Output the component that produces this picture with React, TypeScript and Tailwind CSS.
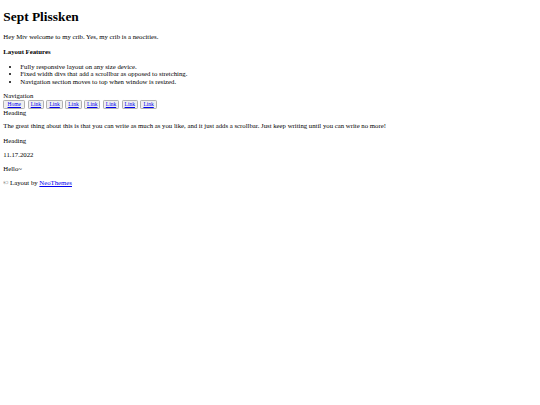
import React from "react";

export default function App() {
  const links = ["Link", "Link", "Link", "Link", "Link", "Link", "Link"];
  const btn =
    "h-[9.2px] bg-[#efefef] border-[0.8px] border-[#b0b0b0] rounded-[1.2px] text-[5.5px] leading-[6.3px] flex items-center justify-center";
  return (
    <div
      className="min-h-[405px] bg-white text-black px-[3.3px] pt-[9px] text-[6.75px] leading-[7.6px]"
      style={{ fontFamily: '"Liberation Serif", "Times New Roman", serif' }}
    >
      <h1 className="text-[13.4px] leading-[15.3px] font-bold">Sept Plissken</h1>
      <p className="mt-[8.9px]">Hey Mtv welcome to my crib. Yes, my crib is a neocities.</p>
      <p className="mt-[7.4px] font-bold">Layout Features</p>
      <ul className="mt-[6.9px] pl-[17px] list-disc">
        <li>Fully responsive layout on any size device.</li>
        <li>Fixed width divs that add a scrollbar as opposed to stretching.</li>
        <li>Navigation section moves to top when window is resized.</li>
      </ul>
      <div className="mt-[6.5px]">Navigation</div>
      <div className="flex gap-[2.4px] h-[9.2px]">
        <button className={`${btn} w-[22px]`}>
          <a className="text-[#0000ee] underline" href="#">Home</a>
        </button>
        {links.map((l, i) => (
          <button key={i} className={`${btn} w-[16.4px]`}>
            <a className="text-[#0000ee] underline" href="#">{l}</a>
          </button>
        ))}
      </div>
      <div>Heading</div>
      <p className="mt-[6.1px]">
        The great thing about this is that you can write as much as you like, and it just adds a scrollbar. Just keep writing until you can write no more!
      </p>
      <p className="mt-[6.6px]">Heading</p>
      <p className="mt-[6.8px]">11.17.2022</p>
      <p className="mt-[6.6px]">Hello~</p>
      <p className="mt-[6.6px]">
        © Layout by <a className="text-[#0000ee] underline" href="#">NeoThemes</a>
      </p>
    </div>
  );
}
